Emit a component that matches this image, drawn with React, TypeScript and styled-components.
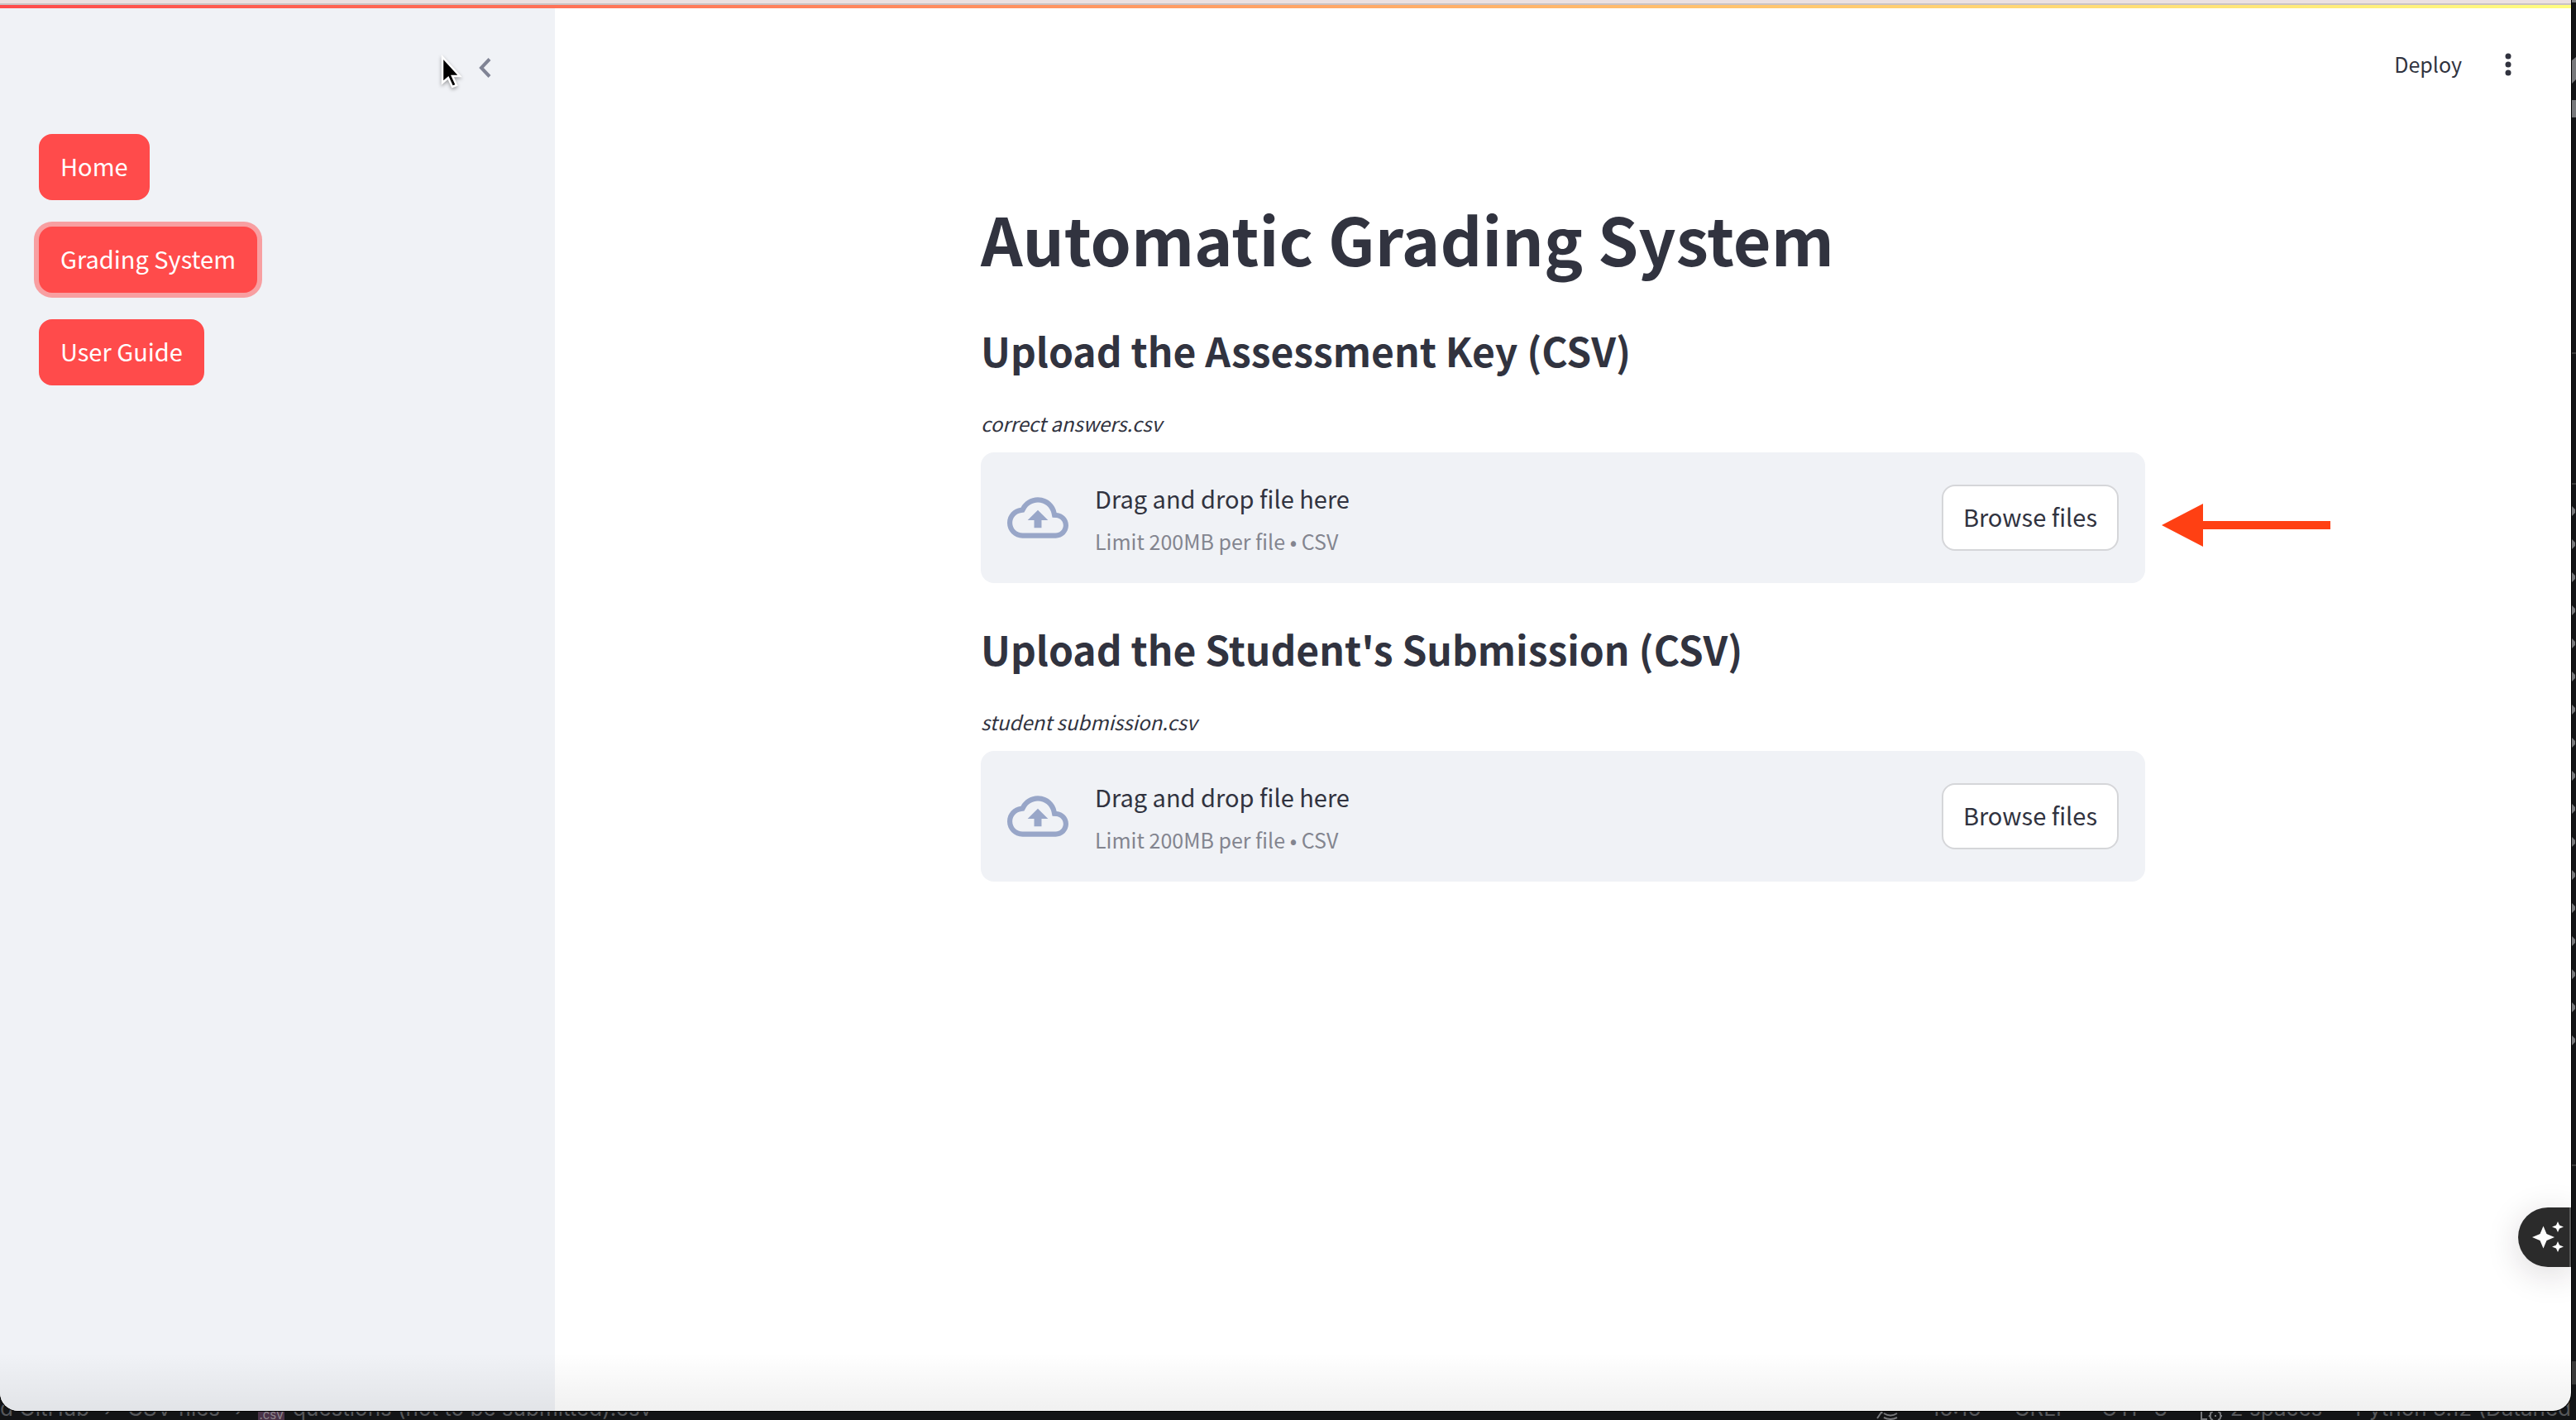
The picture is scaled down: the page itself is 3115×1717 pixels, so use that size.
import React from "react";
import styled, { createGlobalStyle, css } from "styled-components";

const ink = "#31333f";
const panel = "#f0f2f6";

const Global = createGlobalStyle`
  * { box-sizing: border-box; }
  body {
    margin: 0;
    background: #131416;
    color: ${ink};
    font-family: "Noto Sans CJK JP", "Noto Sans", sans-serif;
    font-size: 29px;
    line-height: 40px;
  }
  h1, h2, p { margin: 0; }
  button { font: inherit; cursor: pointer; }
`;

const Desktop = styled.div`
  position: relative;
  display: flex;
  flex-direction: column;
  height: 100vh;
  padding-right: 6px;
  overflow: hidden;
`;

const Browser = styled.div`
  position: relative;
  z-index: 1;
  flex: 1;
  display: flex;
  flex-direction: column;
  background: #fff;
  border-radius: 0 0 22px 22px;
  box-shadow: 0 0 0 1px #000;
  overflow: hidden;
`;

const ToolbarEdge = styled.div`
  flex: none;
  height: 6px;
  background: #ece1e1;
  border-bottom: 2px solid #cbc3c4;
`;

const Decoration = styled.div`
  flex: none;
  height: 4px;
  background: linear-gradient(90deg, #ff4b4b, #fffd80);
`;

const Page = styled.div`
  flex: 1;
  display: flex;
`;

const Sidebar = styled.aside`
  flex: none;
  width: 671px;
  padding: 48px 47px;
  background: ${panel};
`;

const SidebarHead = styled.div`
  display: flex;
  justify-content: flex-end;
  height: 104px;
  padding-right: 14px;
`;

const IconButton = styled.button`
  display: flex;
  align-items: center;
  justify-content: center;
  width: 48px;
  height: 48px;
  padding: 0;
  border: 0;
  background: none;
  color: inherit;
`;

const Nav = styled.nav`
  display: flex;
  flex-direction: column;
  align-items: flex-start;
  gap: 32px;
`;

const Button = styled.button<{ $primary?: boolean; $focused?: boolean }>`
  height: 80px;
  padding: 0 24px 4px;
  border: 2px solid #d5d6d9;
  border-radius: 16px;
  background: #fff;
  color: ${ink};
  white-space: nowrap;
  ${(p) => p.$primary && css`
    border-color: #ff4b4b;
    background: #ff4b4b;
    color: #fff;
  `}
  ${(p) => p.$focused && css`
    box-shadow: 0 0 0 6px rgba(255, 75, 75, 0.5);
  `}
`;

const Main = styled.main`
  flex: 1;
  display: flex;
  flex-direction: column;
`;

const Header = styled.header`
  display: flex;
  justify-content: flex-end;
  align-items: center;
  gap: 32px;
  height: 136px;
  padding-right: 52px;
`;

const Deploy = styled.button`
  padding: 0 0 2px;
  border: 0;
  background: none;
  color: inherit;
  && { font-size: 25px; }
`;

const Block = styled.div`
  width: 100%;
  max-width: 1408px;
  margin: 0 auto;
  padding-top: 86px;
`;

const Title = styled.h1`
  font-size: 79px;
  line-height: 112px;
  font-weight: 700;
`;

const Section = styled.section`
  position: relative;
  padding-top: 45px;
`;

const Heading = styled.h2`
  font-size: 48px;
  line-height: 68px;
  font-weight: 600;
`;

const FileLabel = styled.label`
  display: block;
  margin: 37px 0 17px;
  font-size: 24px;
  line-height: 36px;
  font-style: italic;
`;

const Dropzone = styled.div`
  display: flex;
  align-items: center;
  gap: 30px;
  height: 158px;
  padding: 0 32px;
  border-radius: 16px;
  background: ${panel};
`;

const Instructions = styled.div`
  flex: 1;
  display: flex;
  flex-direction: column;
  gap: 12px;
  padding: 4px 0 0 2px;
`;

const Limit = styled.small`
  font-size: 25px;
  color: #83858f;
`;

const Pointer = styled.svg`
  position: absolute;
  left: calc(100% + 20px);
  bottom: 43px;
`;

const Cursor = styled.svg`
  position: absolute;
  left: 532px;
  top: 66px;
  filter: drop-shadow(0 2px 2px rgba(0, 0, 0, 0.35));
`;

const Assistant = styled.button`
  position: absolute;
  right: 0;
  bottom: 174px;
  display: flex;
  align-items: center;
  width: 64px;
  height: 72px;
  padding: 0 0 0 16px;
  border: 0;
  border-right: 2px solid #5b5b5b;
  border-radius: 36px 0 0 36px;
  background: #2b2b2b;
  box-shadow: 0 8px 40px rgba(40, 20, 30, 0.16);
`;

const BottomShade = styled.div`
  position: absolute;
  inset: auto 0 0 0;
  height: 70px;
  background: linear-gradient(transparent, rgba(0, 0, 0, 0.06));
  pointer-events: none;
`;

const EditorEdge = styled.svg`
  position: absolute;
  top: 0;
  right: 0;
`;

const StatusBar = styled.footer`
  flex: none;
  display: flex;
  justify-content: space-between;
  align-items: flex-end;
  height: 11px;
  color: #56575a;
  font-family: Inter, "Noto Sans", sans-serif;
  font-size: 26px;
  line-height: 28px;
`;

const StatusGroup = styled.div<{ $gap: number }>`
  display: flex;
  align-items: center;
  gap: ${(p) => p.$gap}px;
  white-space: nowrap;
`;

const StatusItem = styled.span`
  display: flex;
  align-items: center;
  gap: 10px;
`;

const FileBadge = styled.span`
  align-self: flex-end;
  width: 32px;
  background: #4a3348;
  color: #8d858c;
  font-size: 15px;
  line-height: 12px;
  text-align: center;
`;

const Chevron = () => (
  <svg width="16" height="24" viewBox="0 0 16 24" fill="none" stroke="#808495" strokeWidth="4">
    <path d="M14 1.5 4 12l10 10.5" />
  </svg>
);

const CloudUpload = () => (
  <svg width="74" height="74" viewBox="0 0 24 24" fill="#98a6c8" aria-hidden="true">
    <path d="M19.35 10.04C18.67 6.59 15.64 4 12 4 9.11 4 6.6 5.64 5.35 8.04 2.34 8.36 0 10.91 0 14c0 3.31 2.69 6 6 6h13c2.76 0 5-2.24 5-5 0-2.64-2.05-4.78-4.65-4.96zM19 18H6c-2.21 0-4-1.79-4-4 0-2.05 1.53-3.76 3.56-3.97l1.07-.11.5-.95C8.08 7.14 9.94 6 12 6c2.62 0 4.88 1.86 5.39 4.43l.3 1.5 1.53.11c1.56.1 2.78 1.41 2.78 2.96 0 1.65-1.35 3-3 3zM8 13h2.55v3h2.9v-3H16l-4-4z" />
  </svg>
);

function Uploader({ id, title, file, arrow }: { id: string; title: string; file: string; arrow?: boolean }) {
  return (
    <Section>
      <Heading>{title}</Heading>
      <FileLabel htmlFor={id}>{file}</FileLabel>
      <Dropzone>
        <CloudUpload />
        <Instructions>
          <span>Drag and drop file here</span>
          <Limit>Limit 200MB per file • CSV</Limit>
        </Instructions>
        <Button id={id} type="button">Browse files</Button>
      </Dropzone>
      {arrow && (
        <Pointer width="204" height="54" viewBox="0 0 204 54" fill="#ff4013" aria-hidden="true">
          <path d="M0 27 50 1v21h154v10H50v21z" />
        </Pointer>
      )}
    </Section>
  );
}

const editorRows = Array.from({ length: 17 }, (_, i) => 618 + i * 40);

export default function App() {
  return (
    <>
      <Global />
      <Desktop>
        <EditorEdge width="5" height="1717" viewBox="0 0 5 1717" fill="#77787b" aria-hidden="true">
          <path d="M0 0h5v3H0zM0 73l5-4v27l-5 5zM0 121h5v21H0z" />
          <path fill="#3a3a3a" d="M0 426h5v2H0zM0 584h5v2H0zM0 1408h5v2H0zM0 1646h5v28H0z" />
          {editorRows.map((y) => <path key={y} d={`M0 ${y - 6}l4 4v4l-4 4z`} />)}
        </EditorEdge>
        <Browser>
          <ToolbarEdge />
          <Decoration />
          <Page>
            <Sidebar>
              <SidebarHead>
                <IconButton type="button" aria-label="Collapse sidebar"><Chevron /></IconButton>
              </SidebarHead>
              <Nav>
                <Button type="button" $primary>Home</Button>
                <Button type="button" $primary $focused>Grading System</Button>
                <Button type="button" $primary>User Guide</Button>
              </Nav>
            </Sidebar>
            <Main>
              <Header>
                <Deploy type="button">Deploy</Deploy>
                <IconButton type="button" aria-label="Menu">
                  <svg width="8" height="28" viewBox="0 0 8 28" fill={ink}>
                    <circle cx="4" cy="4" r="3.5" />
                    <circle cx="4" cy="14" r="3.5" />
                    <circle cx="4" cy="24" r="3.5" />
                  </svg>
                </IconButton>
              </Header>
              <Block>
                <Title>Automatic Grading System</Title>
                <Uploader id="answer-key" title="Upload the Assessment Key (CSV)" file="correct answers.csv" arrow />
                <Uploader id="submission" title="Upload the Student's Submission (CSV)" file="student submission.csv" />
              </Block>
            </Main>
          </Page>
          <BottomShade />
          <Assistant type="button" aria-label="Assistant">
            <svg width="40" height="40" viewBox="0 0 40 40" fill="#fff">
              <path d="M14.500 6.500 18.500 16 28 20l-9.500 4-4 9.500-4-9.500L1 20l9.500-4z" />
              <path d="m32 1 2 4.500 5 2-5 2-2 4.500-2-4.500-5-2 5-2z" />
              <path d="m32 25 2 4.500 5 2-5 2-2 4.500-2-4.500-5-2 5-2z" />
            </svg>
          </Assistant>
          <Cursor width="28" height="42" viewBox="0 0 28 42" aria-hidden="true">
            <path d="M3 3v31l7-6 5 11 5-2-5-11h9z" fill="#000" stroke="#fff" strokeWidth="2.500" />
          </Cursor>
        </Browser>
        <StatusBar>
          <StatusGroup $gap={18}>
            <span>d GitHub</span>
            <span>›</span>
            <span>CSV files</span>
            <span>›</span>
            <StatusItem>
              <FileBadge>.csv</FileBadge>
              <span>questions (not to be submitted).csv</span>
            </StatusItem>
          </StatusGroup>
          <StatusGroup $gap={40}>
            <svg width="26" height="28" viewBox="0 0 26 28" fill="none" stroke="#77787b" strokeWidth="2">
              <path d="M1 26 12 10M2 10l5 10M9 20q8 5 16 0M9 25q8 4 16 0M12 15q6 3 12-1" />
            </svg>
            <span>16:16</span>
            <span>CRLF</span>
            <span>UTF-8</span>
            <StatusItem>
              <svg width="26" height="28" viewBox="0 0 26 28" fill="none" stroke="#77787b" strokeWidth="2">
                <path d="M8 27H1V8M15 18q-3 0-3 3t-2 2q2 0 2 2t3 3M21 18q3 0 3 3t2 2q-2 0-2 2t-3 3M18 22v2" />
              </svg>
              <span>2 spaces</span>
            </StatusItem>
            <span>Python 3.12 (Dataned</span>
          </StatusGroup>
        </StatusBar>
      </Desktop>
    </>
  );
}
